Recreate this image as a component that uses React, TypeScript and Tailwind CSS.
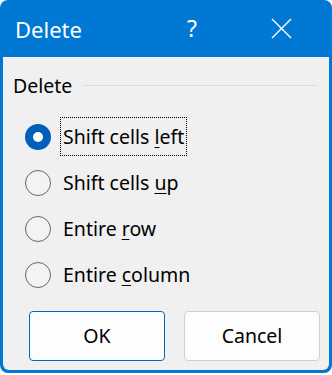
import React from "react";

const options = [
  { pre: "Shift cells ", key: "l", post: "eft", checked: true },
  { pre: "Shift cells ", key: "u", post: "p", checked: false },
  { pre: "Entire ", key: "r", post: "ow", checked: false },
  { pre: "Entire ", key: "c", post: "olumn", checked: false },
];

function Radio({ checked }: { checked: boolean }) {
  if (checked) {
    return (
      <span className="flex h-[26px] w-[26px] shrink-0 items-center justify-center rounded-full bg-[#005fb8]">
        <span className="h-[10px] w-[10px] rounded-full bg-white" />
      </span>
    );
  }
  return <span className="h-[26px] w-[26px] shrink-0 rounded-full border-[1.5px] border-[#666666] bg-[#f3f3f3]" />;
}

export default function App() {
  return (
    <div className="h-[375px] w-[332px] bg-white" style={{ fontFamily: '"Noto Sans", "Open Sans", sans-serif' }}>
      <div className="flex h-[373px] flex-col rounded-[8px] bg-[#0078d4] px-[3px] pb-[3px]">
        {/* title bar */}
        <div className="flex h-[57px] items-center text-white">
          <span className="ml-[12px] w-[172px] text-[22px] leading-none">Delete</span>
          <span className="text-[23px] leading-none">?</span>
          <svg className="ml-[74px]" width="21" height="21" viewBox="0 0 21 21">
            <path d="M1 1 L20 20 M20 1 L1 20" stroke="white" strokeWidth="1.4" fill="none" />
          </svg>
        </div>

        <div className="flex flex-1 flex-col rounded-b-[6px] bg-[#f0f0f0] text-[19.5px] text-black">
          <div className="mt-[19px] flex items-center pl-[10px] pr-[11px]">
            <span className="leading-none">Delete</span>
            <span className="ml-[10px] h-px flex-1 bg-[#dcdcdc]" />
          </div>

          <div className="mt-[28px] flex flex-col gap-[20px] pl-[22px]">
            {options.map((o, i) => (
              <div key={i} className="flex h-[26px] items-center">
                <Radio checked={o.checked} />
                <span
                  className={
                    "ml-[10px] px-[2px] py-[9px] leading-none " +
                    (o.checked ? "outline outline-1 outline-dotted outline-black" : "")
                  }
                >
                  {o.pre}
                  <span className="underline underline-offset-[3px]">{o.key}</span>
                  {o.post}
                </span>
              </div>
            ))}
          </div>

          <div className="mt-auto mb-[9px] flex gap-[19px] pl-[26px]">
            <button className="h-[50px] w-[136px] rounded-[4px] border border-[#0067c0] bg-[#fdfdfd] text-[19.5px]">
              OK
            </button>
            <button className="h-[50px] w-[136px] rounded-[4px] border border-[#d0d0d0] bg-[#fdfdfd] text-[19.5px]">
              Cancel
            </button>
          </div>
        </div>
      </div>
    </div>
  );
}
